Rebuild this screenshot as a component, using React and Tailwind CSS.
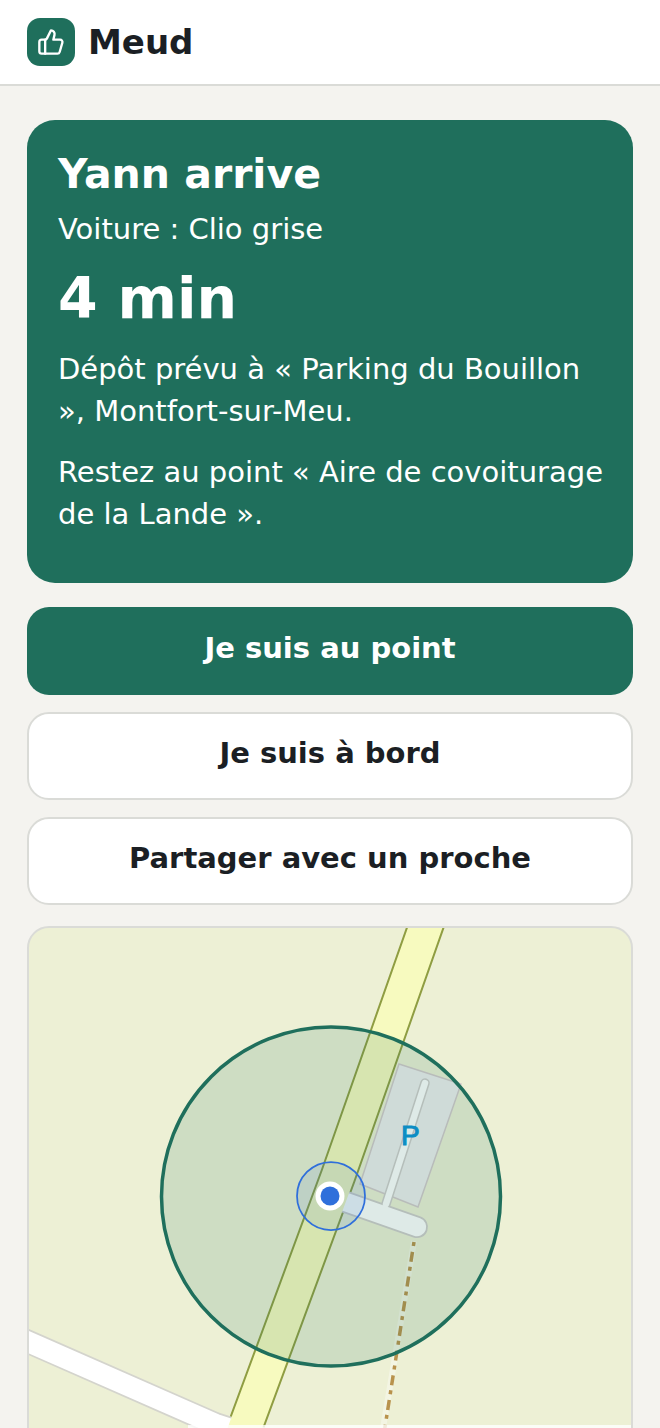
import { ThumbsUp } from "lucide-react";

const MAIN_ROAD = "M 106 -299 L 8 -20 L -118 321";
const SIDE_ROAD = "M -331 133 L -115 228 L -60 246";
const ACCESS_ROAD = "M 10 4 L 87 31";
const PARKING_AISLE = "M 95 -113 L 56 8";

function Header() {
  return (
    <header className="flex items-center gap-[13px] border-b-2 border-[#dadbd7] bg-white px-[27px] py-[18px]">
      <span className="flex size-12 items-center justify-center rounded-[13px] bg-[#1f6f5c] text-white">
        <ThumbsUp className="size-7" strokeWidth={2} aria-hidden="true" />
      </span>
      <span className="text-[34px] leading-[48px] font-bold">Meud</span>
    </header>
  );
}

function RideCard() {
  return (
    <section className="rounded-[28px] bg-[#1f6f5c] pt-[28px] pr-[28px] pb-[48px] pl-[31px] text-white">
      <h1 className="text-[41px] leading-[52px] font-bold">Yann arrive</h1>
      <p className="mt-2 text-[29px] leading-[42px]">Voiture : Clio grise</p>
      <p className="mt-[14px] mb-4 text-[57px] leading-[68px] font-bold">4 min</p>
      <p className="text-[29px] leading-[42px]">
        Dépôt prévu à « Parking du Bouillon », Montfort-sur-Meu.
      </p>
      <p className="mt-[19px] text-[29px] leading-[42px]">
        Restez au point « Aire de covoiturage de la Lande ».
      </p>
    </section>
  );
}

function Actions() {
  return (
    <div className="mt-6 flex flex-col gap-[17px] text-[29px] leading-[42px] font-bold">
      <button type="button" className="rounded-[22px] bg-[#1f6f5c] px-6 pt-5 pb-[26px] text-white">
        Je suis au point
      </button>
      <button type="button" className="rounded-[22px] border-2 border-[#dadbd7] bg-white px-6 pt-[18px] pb-6">
        Je suis à bord
      </button>
      <button type="button" className="rounded-[22px] border-2 border-[#dadbd7] bg-white px-6 pt-[18px] pb-6">
        Partager avec un proche
      </button>
    </div>
  );
}

function MeetingMap() {
  return (
    <div className="relative mt-[21px] h-[540px] overflow-hidden rounded-[22px] border-2 border-[#dadbd7] bg-[#edf0d5]">
      <svg
        className="size-full"
        viewBox="-301 -268 602 536"
        preserveAspectRatio="xMidYMid slice"
        fill="none"
        aria-hidden="true"
      >
        <path d="M 69 -132 L 131 -112 L 88 11 L 30 -12 Z" fill="#eeeeee" stroke="#d3c9cb" strokeWidth="1.5" />
        <path d={MAIN_ROAD} stroke="#8f9d42" strokeWidth="36.5" />
        <path d={SIDE_ROAD} stroke="#d4d4cd" strokeWidth="24" />
        <path d={ACCESS_ROAD} stroke="#cfcccb" strokeWidth="22" strokeLinecap="round" />
        <path d={PARKING_AISLE} stroke="#cfcccb" strokeWidth="9.5" strokeLinecap="round" />
        <path d={SIDE_ROAD} stroke="#ffffff" strokeWidth="20.5" />
        <path d={ACCESS_ROAD} stroke="#ffffff" strokeWidth="18.5" strokeLinecap="round" />
        <path d={PARKING_AISLE} stroke="#ffffff" strokeWidth="6.5" strokeLinecap="round" />
        <path d={MAIN_ROAD} stroke="#f7fabf" strokeWidth="32.5" />
        <path d="M 84 45 L 67 149 L 50 250" stroke="#ffffff" strokeOpacity="0.35" strokeWidth="6" />
        <path d="M 84 46 L 68 149 L 52 250" stroke="#b8924c" strokeWidth="3.5" strokeDasharray="4 6 10 5" />
        <text x="71" y="-51" fill="#0a92d6" stroke="#0a92d6" strokeWidth="1" fontSize="28" fontFamily="'Liberation Sans', sans-serif">
          P
        </text>
        <circle cx="1" cy="0.5" r="169.5" fill="#1f6f5c" fillOpacity="0.15" stroke="#1f6f5c" strokeWidth="3.5" />
        <circle cx="1" cy="0" r="34" fill="#2f6fdb" fillOpacity="0.1" stroke="#2f6fdb" strokeWidth="1.75" />
        <circle cx="0" cy="0" r="14.5" fill="#ffffff" />
        <circle cx="0" cy="0" r="9.5" fill="#2f6fdb" />
      </svg>
      <div className="absolute right-0 bottom-0 h-[39px] w-[443px] bg-white/80" />
    </div>
  );
}

export default function App() {
  return (
    <div className="min-h-screen bg-[#f4f3ef] font-['DejaVu_Sans',sans-serif] text-[#1b1f24]">
      <Header />
      <main className="px-[27px] pt-[34px]">
        <RideCard />
        <Actions />
        <MeetingMap />
      </main>
    </div>
  );
}
